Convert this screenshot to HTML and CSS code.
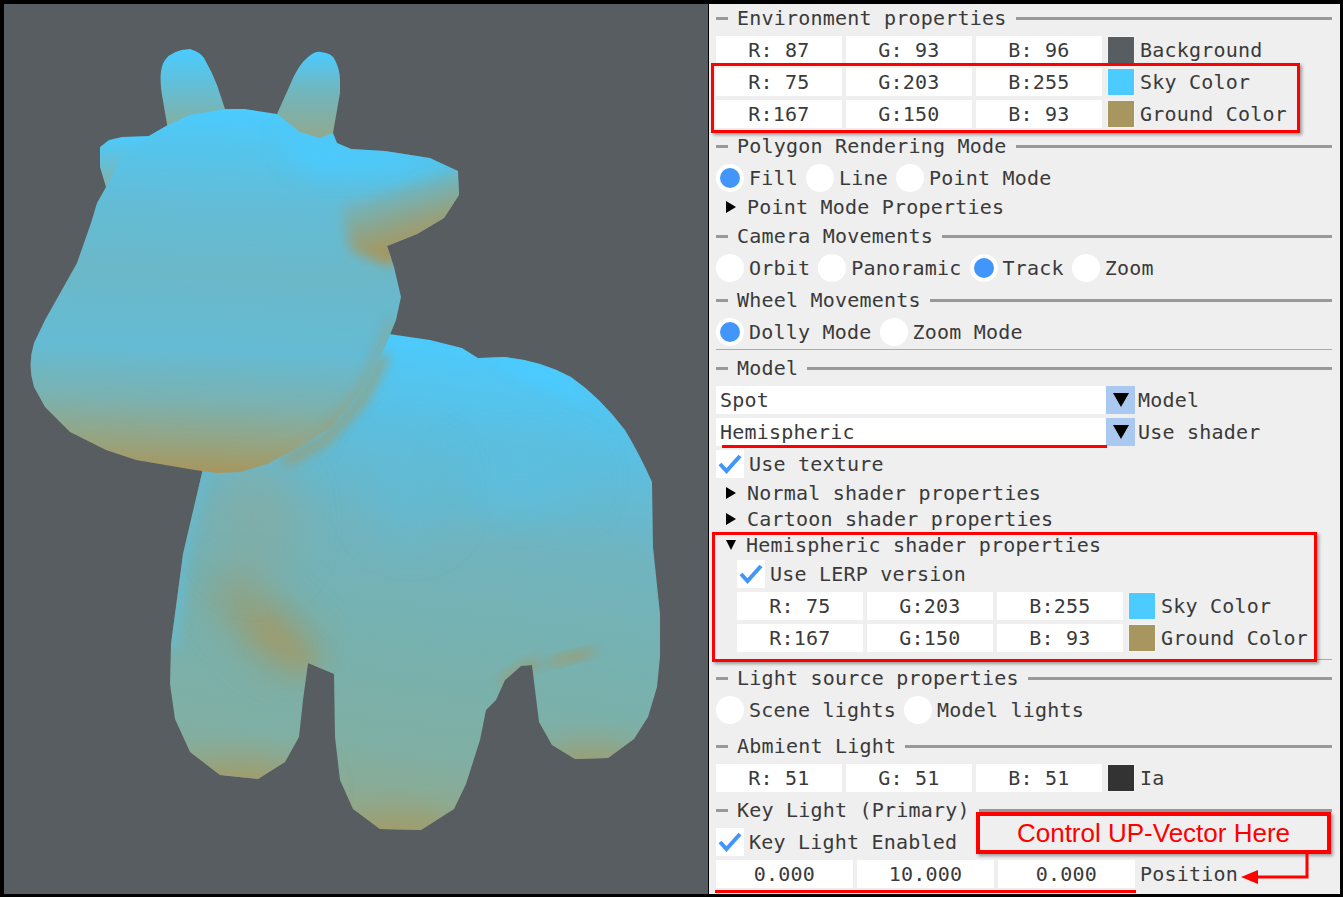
FILE: index.html
```html
<!DOCTYPE html>
<html lang="en">
<head>
  <meta charset="UTF-8">
  <meta name="viewport" content="width=device-width, initial-scale=1.0">
  <title>Hemispheric shader viewer</title>
  <link rel="stylesheet" href="styles.css">
</head>
<body>
  <div class="app">
    <div class="viewport">
      <svg class="cow" viewBox="4 4 704 890" xmlns="http://www.w3.org/2000/svg">
        <defs>
          <linearGradient id="headFill" gradientUnits="userSpaceOnUse" x1="230" y1="110" x2="215" y2="473">
            <stop offset="0" stop-color="#4bcbff"/>
            <stop offset="0.08" stop-color="#52c6f0"/>
            <stop offset="0.25" stop-color="#62bdd8"/>
            <stop offset="0.45" stop-color="#6bb8c8"/>
            <stop offset="0.66" stop-color="#64bbd4"/>
            <stop offset="0.8" stop-color="#7ab2b2"/>
            <stop offset="0.92" stop-color="#96a481"/>
            <stop offset="1" stop-color="#a7965d"/>
          </linearGradient>
          <linearGradient id="bodyFill" gradientUnits="userSpaceOnUse" x1="520" y1="345" x2="450" y2="830">
            <stop offset="0" stop-color="#4bcbff"/>
            <stop offset="0.2" stop-color="#5cbfe0"/>
            <stop offset="0.4" stop-color="#70b4bf"/>
            <stop offset="0.65" stop-color="#78b1ae"/>
            <stop offset="0.85" stop-color="#80afa4"/>
            <stop offset="1" stop-color="#8fa98c"/>
          </linearGradient>
          <linearGradient id="earFill" gradientUnits="userSpaceOnUse" x1="0" y1="50" x2="0" y2="130">
            <stop offset="0" stop-color="#4bcbff"/>
            <stop offset="0.5" stop-color="#66bdd2"/>
            <stop offset="1" stop-color="#86ae9d"/>
          </linearGradient>
          <linearGradient id="rightEarFill" gradientUnits="userSpaceOnUse" x1="0" y1="52" x2="0" y2="134">
            <stop offset="0" stop-color="#4bcbff"/>
            <stop offset="0.45" stop-color="#6fb7c0"/>
            <stop offset="1" stop-color="#8eaa92"/>
          </linearGradient>
          <linearGradient id="flapFill" gradientUnits="userSpaceOnUse" x1="0" y1="136" x2="0" y2="188">
            <stop offset="0" stop-color="#4bcbff"/>
            <stop offset="1" stop-color="#7fb2ab"/>
          </linearGradient>
          <linearGradient id="snoutFill" gradientUnits="userSpaceOnUse" x1="405" y1="173" x2="427" y2="240">
            <stop offset="0" stop-color="#a7965d" stop-opacity="0"/>
            <stop offset="1" stop-color="#a7965d"/>
          </linearGradient>
          <filter id="blur6" x="-50%" y="-50%" width="200%" height="200%"><feGaussianBlur stdDeviation="6"/></filter>
          <filter id="blur12" x="-50%" y="-50%" width="200%" height="200%"><feGaussianBlur stdDeviation="12"/></filter>
          <filter id="blur20" x="-50%" y="-50%" width="200%" height="200%"><feGaussianBlur stdDeviation="20"/></filter>
          <path id="headShape" d="M168 125L190 115L226 109L245 109L277 114L300 125L333 133L337 143L351 149L385 151L430 158L458 171L459 195L444 218L417 234L387 246L394 267L401 297L396 320L385 347L362 390L331 427L299 447L290 452L267 464L240 472L217 473L195 470L136 460L106 450L70 432L45 407L34 387Q27 365 34 343L45 320L77 263L91 223L97 203L106 187L120 160L149 136Z"/>
          <path id="bodyShape" d="M389 334L430 340L462 348L478 358L503 357Q540 360 571 377Q600 397 625 430Q640 455 652 482L653 547L660 614L660 657L657 687L648 717L634 739L608 758L575 759L552 745L539 722L532 665L521 666L505 680L496 700L486 710L480 740L466 784L454 809L421 830L380 829L353 809L340 780L335 737L334 674L308 663L303 700L299 737L285 762L258 779L220 775L190 752L175 719L170 684L171 644L183 554L198 490L205 460L300 400Z"/>
          <clipPath id="headClip"><use href="#headShape"/></clipPath>
          <clipPath id="bodyClip"><use href="#bodyShape"/></clipPath>
        </defs>

        <!-- body and legs -->
        <use href="#bodyShape" fill="url(#bodyFill)"/>
        <g clip-path="url(#bodyClip)">
          <path fill="#4bcbff" opacity="0.9" filter="url(#blur6)" d="M480 350L545 362L625 430L590 405L520 378Z"/>
          <path fill="none" stroke="#a7965d" stroke-width="50" opacity="0.6" filter="url(#blur20)" d="M225 575L262 625L305 660"/>
          <path fill="none" stroke="#a7965d" stroke-width="22" opacity="0.65" filter="url(#blur12)" d="M255 620L312 668"/>
          <ellipse cx="572" cy="657" rx="26" ry="4" fill="#a7965d" opacity="0.85" filter="url(#blur6)" transform="rotate(-15 572 657)"/>
          <ellipse cx="520" cy="672" rx="24" ry="6" fill="#a7965d" opacity="0.6" filter="url(#blur6)" transform="rotate(-30 520 672)"/>
          <ellipse cx="240" cy="795" rx="70" ry="28" fill="#a7965d" filter="url(#blur20)"/>
          <ellipse cx="400" cy="850" rx="70" ry="30" fill="#a7965d" filter="url(#blur20)"/>
          <ellipse cx="592" cy="778" rx="60" ry="28" fill="#a7965d" filter="url(#blur20)"/>
          <path fill="none" stroke="#62bedb" stroke-width="10" opacity="0.7" filter="url(#blur6)" d="M205 470L183 560L172 650"/>
          <ellipse cx="255" cy="520" rx="45" ry="60" fill="#88ab9e" opacity="0.6" filter="url(#blur20)"/>
          <path fill="none" stroke="#a7965d" stroke-width="10" opacity="0.75" filter="url(#blur6)" d="M385 355L362 400L325 440L285 462"/>
          <ellipse cx="520" cy="480" rx="70" ry="36" fill="#5cbfe0" opacity="0.7" filter="url(#blur20)"/>
          <ellipse cx="410" cy="490" rx="40" ry="50" fill="#60bcd8" opacity="0.6" filter="url(#blur20)"/>
        </g>

        <!-- ears behind the head -->
        <path fill="url(#flapFill)" d="M106 187L100 167L100 147L109 140L122 137L149 136L168 125L140 180Z"/>
        <path fill="url(#earFill)" d="M168 130L162 95Q158 70 165 60Q172 50 190 49Q200 52 204 58Q212 72 217 85L226 112Z"/>

        <!-- head -->
        <use href="#headShape" fill="url(#headFill)"/>
        <g clip-path="url(#headClip)">
          <path fill="#4bcbff" filter="url(#blur12)" opacity="0.9" d="M280 130L340 145L440 160L400 172L320 176L290 160Z"/>
          <path fill="url(#snoutFill)" filter="url(#blur6)" d="M340 205L470 165L470 250L385 265L350 250Z"/>
          <path fill="none" stroke="#a7965d" stroke-width="6" opacity="0.55" filter="url(#blur6)" d="M392 320L362 390L320 440"/>
        </g>

        <!-- right ear sits in front -->
        <path fill="url(#rightEarFill)" d="M277 114L290 85Q298 65 308 57Q315 51 321 52Q332 53 335 60Q340 70 340 80L340 93L333 133L320 138L300 132Z"/>
      </svg>
    </div>

    <div class="panel">
      <div class="header"><i class="dash"></i><span>Environment properties</span><i class="rule"></i></div>
      <div class="row">
        <div class="input">R: 87</div><div class="input">G: 93</div><div class="input">B: 96</div>
        <i class="swatch swatch-bg"></i><span class="label">Background</span>
      </div>
      <div class="row">
        <div class="input">R: 75</div><div class="input">G:203</div><div class="input">B:255</div>
        <i class="swatch swatch-sky"></i><span class="label">Sky Color</span>
      </div>
      <div class="row">
        <div class="input">R:167</div><div class="input">G:150</div><div class="input">B: 93</div>
        <i class="swatch swatch-ground"></i><span class="label">Ground Color</span>
      </div>

      <div class="header"><i class="dash"></i><span>Polygon Rendering Mode</span><i class="rule"></i></div>
      <div class="radios">
        <div class="radio on"><i></i><span>Fill</span></div>
        <div class="radio"><i></i><span>Line</span></div>
        <div class="radio"><i></i><span>Point Mode</span></div>
      </div>
      <div class="tree"><i class="tri-right"></i><span>Point Mode Properties</span></div>

      <div class="header"><i class="dash"></i><span>Camera Movements</span><i class="rule"></i></div>
      <div class="radios">
        <div class="radio"><i></i><span>Orbit</span></div>
        <div class="radio"><i></i><span>Panoramic</span></div>
        <div class="radio on"><i></i><span>Track</span></div>
        <div class="radio"><i></i><span>Zoom</span></div>
      </div>

      <div class="header"><i class="dash"></i><span>Wheel Movements</span><i class="rule"></i></div>
      <div class="radios">
        <div class="radio on"><i></i><span>Dolly Mode</span></div>
        <div class="radio"><i></i><span>Zoom Mode</span></div>
      </div>
      <hr class="sep sep-model">

      <div class="header"><i class="dash"></i><span>Model</span><i class="rule"></i></div>
      <div class="row combo-row">
        <div class="combo"><span>Spot</span></div><div class="combo-btn"><i></i></div>
        <span class="label">Model</span>
      </div>
      <div class="row combo-row">
        <div class="combo"><span>Hemispheric</span></div><div class="combo-btn"><i></i></div>
        <span class="label">Use shader</span>
      </div>
      <div class="check">
        <svg class="check-box" viewBox="0 0 28 28"><path d="M4 14L10.500 21L24 6" fill="none" stroke="#4296fa" stroke-width="4"/></svg>
        <span>Use texture</span>
      </div>
      <div class="tree"><i class="tri-right"></i><span>Normal shader properties</span></div>
      <div class="tree"><i class="tri-right"></i><span>Cartoon shader properties</span></div>
      <div class="tree"><i class="tri-down"></i><span>Hemispheric shader properties</span></div>
      <div class="group">
        <div class="check">
          <svg class="check-box" viewBox="0 0 28 28"><path d="M4 14L10.500 21L24 6" fill="none" stroke="#4296fa" stroke-width="4"/></svg>
          <span>Use LERP version</span>
        </div>
        <div class="row">
          <div class="input">R: 75</div><div class="input">G:203</div><div class="input">B:255</div>
          <i class="swatch swatch-sky"></i><span class="label">Sky Color</span>
        </div>
        <div class="row">
          <div class="input">R:167</div><div class="input">G:150</div><div class="input">B: 93</div>
          <i class="swatch swatch-ground"></i><span class="label">Ground Color</span>
        </div>
      </div>
      <hr class="sep sep-light">

      <div class="header"><i class="dash"></i><span>Light source properties</span><i class="rule"></i></div>
      <div class="radios">
        <div class="radio"><i></i><span>Scene lights</span></div>
        <div class="radio"><i></i><span>Model lights</span></div>
      </div>

      <div class="header header-gap"><i class="dash"></i><span>Abmient Light</span><i class="rule"></i></div>
      <div class="row">
        <div class="input">R: 51</div><div class="input">G: 51</div><div class="input">B: 51</div>
        <i class="swatch swatch-ia"></i><span class="label">Ia</span>
      </div>

      <div class="header"><i class="dash"></i><span>Key Light (Primary)</span><i class="rule"></i></div>
      <div class="check">
        <svg class="check-box" viewBox="0 0 28 28"><path d="M4 14L10.500 21L24 6" fill="none" stroke="#4296fa" stroke-width="4"/></svg>
        <span>Key Light Enabled</span>
      </div>
      <div class="row row-wide">
        <div class="input">0.000</div><div class="input">10.000</div><div class="input">0.000</div>
        <span class="label">Position</span>
      </div>
    </div>
  </div>

  <!-- red notes drawn over the screenshot -->
  <div class="note note-env"></div>
  <div class="note note-hemi"></div>
  <div class="mark mark-shader"></div>
  <div class="mark mark-position"></div>
  <div class="note note-up">Control UP-Vector Here</div>
  <svg class="note-arrow" viewBox="0 0 80 30" xmlns="http://www.w3.org/2000/svg">
    <path d="M66 0V23H14" fill="none" stroke="#f00" stroke-width="3"/>
    <path d="M0 23L17 16V30Z" fill="#f00"/>
  </svg>
</body>
</html>
```

FILE: styles.css
```css
* {
  box-sizing: border-box;
}

body {
  margin: 0;
  background-color: #000;
  font-family: "DejaVu Sans Mono", monospace;
  font-size: 20px;
  line-height: 20px;
  letter-spacing: 0.21px;
  color: #3a3a3a;
  overflow: hidden;
}

.app {
  display: flex;
  height: 897px;
  padding: 4px 3px 3px 4px;
}

.viewport {
  width: 704px;
  margin-right: 1px;
  background-color: #575d60;
}

.cow {
  display: block;
  width: 704px;
  height: 890px;
}

.panel {
  flex: 1;
  display: flex;
  flex-direction: column;
  gap: 4px;
  padding: 0 8px 0 7px;
  background-color: #efefef;
  overflow: hidden;
}

.header {
  display: flex;
  align-items: center;
  flex: 0 0 28px;
  gap: 9px;
}

.header-gap {
  margin-top: 4px;
}

.dash {
  width: 12px;
  height: 3px;
  background-color: #999;
}

.rule {
  flex: 1;
  height: 3px;
  background-color: #999;
}

.row {
  display: flex;
  align-items: center;
  flex: 0 0 28px;
  gap: 4px;
}

.input {
  width: 126px;
  height: 28px;
  line-height: 28px;
  text-align: center;
  background-color: #fff;
}

.row-wide .input {
  width: 137px;
}

.swatch {
  width: 28px;
  height: 28px;
  margin-left: 1px;
  border: 1px solid #f4f4f4;
}

.swatch-bg { background-color: #575d60; }
.swatch-sky { background-color: #4bcbff; }
.swatch-ground { background-color: #a7965d; }
.swatch-ia { background-color: #333; }

.label {
  margin-left: 1px;
}

.radios {
  display: flex;
  flex: 0 0 28px;
  gap: 8px;
}

.radio {
  display: flex;
  align-items: center;
  gap: 5px;
}

.radio i {
  width: 28px;
  height: 28px;
  border-radius: 50%;
  background-color: #fff;
}

.radio.on i {
  border: 4px solid #fff;
  background-color: #4296fa;
}

.tree {
  display: flex;
  align-items: center;
  flex: 0 0 22px;
  padding-left: 10px;
}

.tri-right {
  width: 0;
  height: 0;
  margin-right: 11px;
  border-style: solid;
  border-width: 6px 0 6px 10px;
  border-color: transparent transparent transparent #000;
}

.tri-down {
  width: 0;
  height: 0;
  margin-right: 10px;
  border-style: solid;
  border-width: 10px 5.500px 0 5.500px;
  border-color: #000 transparent transparent transparent;
}

.combo-row {
  gap: 0;
}

.combo {
  width: 390px;
  height: 28px;
  line-height: 28px;
  padding-left: 4px;
  background-color: #fff;
}

.combo-btn {
  display: flex;
  align-items: center;
  justify-content: center;
  width: 29px;
  height: 28px;
  background-color: #a9c9f1;
}

.combo-btn i {
  width: 0;
  height: 0;
  border-style: solid;
  border-width: 14px 8px 0 8px;
  border-color: #000 transparent transparent transparent;
}

.combo-row .label {
  margin-left: 3px;
}

.check {
  display: flex;
  align-items: center;
  flex: 0 0 28px;
  gap: 5px;
}

.check-box {
  width: 28px;
  height: 28px;
  background-color: #fff;
}

.group {
  display: flex;
  flex-direction: column;
  gap: 4px;
  padding-left: 21px;
}

.sep {
  flex: 0 0 1px;
  width: 100%;
  margin: 0;
  border: 0;
  background-color: #aaa;
}

.sep-model {
  margin-top: -1px;
}

.sep-light {
  margin-top: 3px;
}

.note {
  position: absolute;
  border: 3px solid #f00;
  box-shadow: 2px 2px 3px rgba(0, 0, 0, 0.35);
}

.note-env {
  left: 711px;
  top: 63px;
  width: 589px;
  height: 70px;
}

.note-hemi {
  left: 712px;
  top: 532px;
  width: 605px;
  height: 130px;
}

.note-up {
  left: 976px;
  top: 812px;
  width: 355px;
  height: 42px;
  border-width: 4px;
  background-color: #efefef;
  color: #f00;
  font-family: "Liberation Sans", Arial, sans-serif;
  font-size: 26px;
  letter-spacing: 0;
  line-height: 34px;
  text-align: center;
}

.mark {
  position: absolute;
  height: 3px;
  background-color: #f00;
}

.mark-shader {
  left: 722px;
  top: 445px;
  width: 385px;
}

.mark-position {
  left: 715px;
  top: 890px;
  width: 421px;
}

.note-arrow {
  position: absolute;
  left: 1241px;
  top: 854px;
  width: 80px;
  height: 30px;
}
```
